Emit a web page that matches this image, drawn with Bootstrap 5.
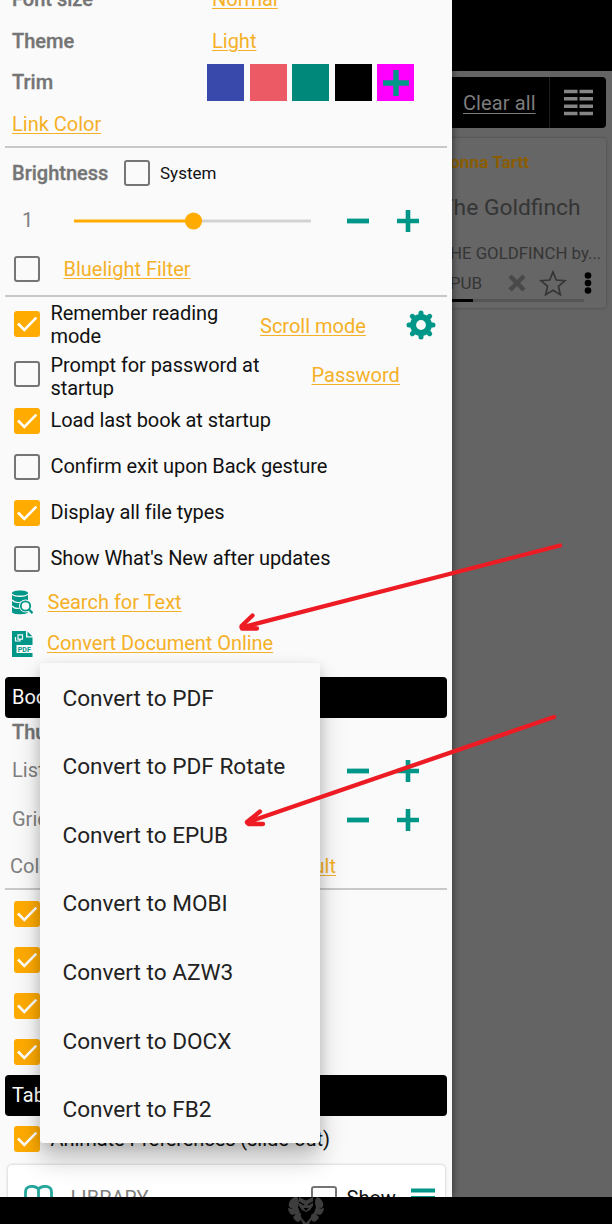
<!DOCTYPE html>
<html lang="en">
<head>
<meta charset="utf-8">
<meta name="viewport" content="width=device-width, initial-scale=1">
<title>Preferences</title>
<link href="https://cdn.jsdelivr.net/npm/bootstrap@5.3.0/dist/css/bootstrap.min.css" rel="stylesheet">
<script src="https://cdn.jsdelivr.net/npm/bootstrap@5.3.0/dist/js/bootstrap.bundle.min.js" defer></script>
<style>
body{font-family:Roboto,"Liberation Sans",sans-serif;font-size:20px;line-height:23px;background:#000;color:#111;width:612px;height:1224px;overflow:hidden}
.screen{height:1197px}
.drawer{width:451.5px;background:#fafafa;box-shadow:1px 0 7px rgba(0,0,0,.45);z-index:2}
.line{display:flex;align-items:center;flex:none;padding-left:12px;white-space:nowrap}
.opt{height:46px;padding-left:14px}
.lbl{font-weight:500;color:#757575;-webkit-text-stroke:.35px #757575}
.soft{color:#808080}
.lnk{color:#f5b027;text-decoration:underline;text-decoration-thickness:1.3px;text-underline-offset:2px}
.lnk:hover{color:#f5b027}
.rule{height:2px;background:#c8c8c8;margin:0 4.5px 0 5px;flex:none}
.box{width:26px;height:26px;border:2.6px solid #757575;border-radius:3px;flex:none}
.box.on{background:#ffab00;border:0}
.box svg{display:block}
.head-bar{height:41px;background:#000;color:#fff;border-radius:4px;margin:0 4.5px 0 5px;padding-left:7px;flex:none}
.chip{width:37px;height:37px;margin-right:5.5px}
.h42{height:42px}.name{width:200px}
.txt{margin-left:10.5px;letter-spacing:-.07px}
.pm{width:22px;height:22px;flex:none}
.tray{height:68px;margin:3px 7px 0 8px;background:#fff;border-radius:4px;box-shadow:0 0 3px rgba(0,0,0,.25);flex:none}
.popup-menu{left:40px;top:663px;width:280px;height:480px;background:#fafafa;border-radius:3px;z-index:4;padding-top:1px;box-shadow:0 16px 26px rgba(0,0,0,.23),0 3px 12px rgba(0,0,0,.12)}
.popup-menu div{height:68.55px;display:flex;align-items:center;padding-left:22.5px;font-size:22.6px;color:#222}
.shelf{background:#646464;color:#353535}
.tools{height:51px;background:#000;margin:6px 6px 0 -20px;border-radius:4px;color:#7c7c7c}
.book{margin:10px 6px 0 -20px;height:170px;background:#666;border-radius:3px;box-shadow:0 0 3px rgba(0,0,0,.3);padding-left:19.5px}
.marks{z-index:5;pointer-events:none}
</style>
</head>
<body class="position-relative">
<svg width="0" height="0" class="position-absolute"><defs>
<path id="tick" d="M4 12.5l6.3 6.3L22.3 6.7" fill="none" stroke="#fff" stroke-width="2.6"/>
<path id="plus" d="M0 11h22M11 0v22" fill="none" stroke="#009688" stroke-width="4.6"/>
<path id="minus" d="M0 11h22" fill="none" stroke="#009688" stroke-width="4.8"/>
</defs></svg>
<div class="screen d-flex overflow-hidden">
 <main class="drawer d-flex flex-column flex-shrink-0 position-relative">
  <div class="line h42" style="margin-top:-22px"><span class="lbl name">Font size</span><a class="lnk">Normal</a></div>
  <div class="line h42"><span class="lbl name">Theme</span><a class="lnk">Light</a></div>
  <div class="line" style="height:41px"><span class="lbl" style="width:195px">Trim</span>
   <span class="chip" style="background:#3949ab"></span><span class="chip" style="background:#ec5a66"></span><span class="chip" style="background:#00897b"></span><span class="chip" style="background:#000"></span><span class="chip d-flex align-items-center justify-content-center" style="background:#f0f"><svg width="26" height="26" viewBox="0 0 22 22"><use href="#plus"/></svg></span></div>
  <div class="line" style="height:43px"><a class="lnk">Link Color</a></div>
  <div class="rule"></div>
  <div class="line" style="height:50px"><span class="lbl" style="width:112px">Brightness</span><span class="box"></span><span style="font-size:17px;margin-left:10px">System</span></div>
  <div class="line" style="height:45px"><span class="soft" style="width:62px;padding-left:10px">1</span>
   <svg width="238" height="20"><path d="M119 10h118" stroke="#d3d3d3" stroke-width="3"/><path d="M0 10h119" stroke="#ffab00" stroke-width="3.2"/><circle cx="119.500" cy="10" r="8.600" fill="#ffab00"/></svg>
   <svg class="pm" style="margin-left:35px"><use href="#minus"/></svg><svg class="pm" style="margin-left:28px"><use href="#plus"/></svg></div>
  <div class="line" style="height:52px;padding-left:14px"><span class="box"></span><a class="lnk" style="margin-left:23.500px">Bluelight Filter</a></div>
  <div class="rule"></div>
  <div class="line opt" style="height:53px"><span class="box on"><svg width="26" height="26"><use href="#tick"/></svg></span><span class="txt" style="width:209.500px;padding-top:3px">Remember reading<br>mode</span><a class="lnk" style="padding-top:5px">Scroll mode</a>
   <svg width="30" height="30" viewBox="-15 -15 30 30" style="margin-left:40px;margin-top:2px"><circle r="7.900" fill="none" stroke="#009688" stroke-width="6"/><g stroke="#009688" stroke-width="5" stroke-linecap="round"><path d="M0-12v2M0 12v-2M-12 0h2M12 0h-2M-8.700-8.700l2 2M8.700 8.700l-2-2M-8.700 8.700l2-2M8.700-8.700l-2 2"/></g></svg></div>
  <div class="line opt" style="height:47.500px;overflow:hidden"><span class="box"></span><span class="txt" style="width:261px;padding-top:6px">Prompt for password at<br>startup</span><a class="lnk" style="padding-top:3px">Password</a></div>
  <div class="line opt"><span class="box on"><svg width="26" height="26"><use href="#tick"/></svg></span><span class="txt">Load last book at startup</span></div>
  <div class="line opt"><span class="box"></span><span class="txt">Confirm exit upon Back gesture</span></div>
  <div class="line opt"><span class="box on"><svg width="26" height="26"><use href="#tick"/></svg></span><span class="txt">Display all file types</span></div>
  <div class="line opt"><span class="box"></span><span class="txt">Show What's New after updates</span></div>
  <div class="line" style="height:41px"><svg width="21" height="25" viewBox="0 0 21 25"><path d="M0 3C0-.5 16-.5 16 3v19c0 3-16 3-16 0z" fill="#009688"/><path d="M0 4c2 3 14 3 16 0M0 10c2 2 6 3 9 2M0 16c2 2 5 3 8 2" fill="none" stroke="#fafafa" stroke-width="1.300"/><circle cx="13.500" cy="16" r="6.500" fill="#fafafa"/><circle cx="13.500" cy="16" r="4.700" fill="#fafafa" stroke="#009688" stroke-width="1.800"/><path d="M17 19.500l3.500 3.700" stroke="#009688" stroke-width="2.300"/></svg><a class="lnk" style="margin-left:14.500px">Search for Text</a></div>
  <div class="line" style="height:42px"><svg width="21" height="26" viewBox="0 0 21 26"><path d="M0 0h14v6.500h6.500V14H4.500v8h16v4H0z" fill="#009688"/><path d="M15.500.5v4.800h4.800z" fill="#009688"/><path d="M3.500 6v4h4.500V8.500M6 3.800h4.500v4.300H6z" fill="none" stroke="#fafafa" stroke-width="1.200"/><text x="5.800" y="21" font-size="8" font-weight="700" fill="#009688" textLength="13" lengthAdjust="spacingAndGlyphs">PDF</text></svg><a class="lnk" style="margin-left:14px;letter-spacing:-.05px">Convert Document Online</a></div>
  <div class="head-bar d-flex align-items-center" style="margin-top:12.500px">Book list</div>
  <div class="line" style="height:29px"><span class="lbl">Thumbnails</span></div>
  <div class="line soft" style="height:47px"><span style="width:335px">List</span><svg class="pm"><use href="#minus"/></svg><svg class="pm" style="margin-left:28px"><use href="#plus"/></svg></div>
  <div class="line soft" style="height:51.500px"><span style="width:335px">Grid</span><svg class="pm"><use href="#minus"/></svg><svg class="pm" style="margin-left:28px"><use href="#plus"/></svg></div>
  <div class="line soft justify-content-between" style="height:42px;padding-left:10px;padding-right:115.500px"><span>Color</span><a class="lnk">Default</a></div>
  <div class="rule"></div>
  <div class="line opt" style="margin-top:1px"><span class="box on"><svg width="26" height="26"><use href="#tick"/></svg></span></div>
  <div class="line opt"><span class="box on"><svg width="26" height="26"><use href="#tick"/></svg></span></div>
  <div class="line opt"><span class="box on"><svg width="26" height="26"><use href="#tick"/></svg></span></div>
  <div class="line opt"><span class="box on"><svg width="26" height="26"><use href="#tick"/></svg></span></div>
  <div class="head-bar d-flex align-items-center">Tabs</div>
  <div class="line opt"><span class="box on"><svg width="26" height="26"><use href="#tick"/></svg></span><span class="txt" style="padding-top:2px">Animate Preferences (slide-out)</span></div>
  <div class="tray d-flex align-items-center">
   <svg width="29" height="28" viewBox="0 0 29 28" style="margin-left:16px;margin-top:1px"><path d="M14.500 4C12 1 7 1 4.500 2 2 3 1.500 4 1.500 7v20M14.500 4C17 1 22 1 24.500 2c2.500 1 3 2 3 5v20M14.500 3v24" fill="none" stroke="#26a69a" stroke-width="2.800"/></svg>
   <span class="soft" style="margin-left:17.500px;width:240px">LIBRARY</span><span class="box"></span><span style="margin-left:10px;width:64px">Show</span>
   <svg width="24" height="24"><path d="M0 3.500h24M0 11h24M0 19h24" stroke="#009688" stroke-width="4"/></svg></div>
 </main>
 <aside class="shelf flex-grow-1 d-flex flex-column">
  <div style="height:71px;background:#000"></div>
  <div class="tools d-flex align-items-center">
   <a style="margin-left:31.500px;width:86px;text-decoration:underline;text-decoration-thickness:1.300px;text-underline-offset:3px;white-space:nowrap;padding-top:1px;letter-spacing:.1px">Clear all</a>
   <span class="h-100" style="border-left:1.500px solid #1d1d1d;width:15px"></span>
   <svg width="29" height="27"><path d="M0 2.500h13.500M15.500 2.500H29M0 9.800h13.500M15.500 9.800H29M0 17.200h13.500M15.500 17.200H29M0 24.500h13.500M15.500 24.500H29" stroke="#858585" stroke-width="3.600"/></svg>
  </div>
  <div class="book text-nowrap position-relative">
   <div style="padding-top:13px;font-size:17.200px;font-weight:700;color:#8a5c00;margin-left:-12px">Donna Tartt</div>
   <div style="padding-top:22px;font-size:22.800px;margin-left:-11px">The Goldfinch</div>
   <div style="padding-top:23px;font-size:16.800px;margin-left:-11px">THE GOLDFINCH by...</div>
   <div class="d-flex align-items-center" style="height:36px;font-size:17px"><span style="margin-left:-11px;width:67.500px">EPUB</span>
    <svg width="18" height="18"><path d="M2 2l14 14M16 2L2 16" stroke="#494949" stroke-width="4.500"/></svg>
    <svg width="28" height="27" viewBox="0 0 28 27" style="margin-left:13px"><path d="M14 2l3.300 8 8.700.7-6.600 5.700 2 8.400L14 20.200l-7.400 4.600 2-8.400L2 10.700l8.700-.7z" fill="none" stroke="#353535" stroke-width="1.700"/></svg>
    <svg width="8" height="22" style="margin-left:17px"><g fill="#000"><circle cx="4" cy="3.500" r="3.300"/><circle cx="4" cy="11" r="3.300"/><circle cx="4" cy="18.500" r="3.300"/></g></svg></div>
   <div class="d-flex" style="height:3px;width:133px;background:#555;margin-top:-2px"><span style="width:22px;background:#000"></span></div>
  </div>
 </aside>
</div>
<footer style="height:27px;background:#000" class="position-relative overflow-hidden">
 <svg width="36" height="27" viewBox="0 0 36 27" class="d-block" style="margin-left:288px"><g fill="#3d3d3d"><path d="M11 0l7 3.500L25 0v9l-3 4-4 2-4-2-3-4z"/><path d="M7 0C2 2 0 6 1 10l4 2-5-1c0 3 2 6 4 7l4-1-3 3c1 3 3 4 5 5l3-2 2 4h6l2-4 3 2c2-1 4-2 5-5l-3-3 4 1c2-1 4-4 4-7l-5 1 4-2c1-4-1-8-6-10-3 4-2 7-1 10l-2 6-7 4-7-4-2-6c1-3 2-6-1-10z"/></g><path d="M11 5l5 3M25 5l-5 3" stroke="#000" stroke-width="1.300"/><path d="M15.500 11h5l-2.500 3zM13 17l5-2 5 2c1 4-3 6-5 9-2-3-6-5-5-9" fill="#000"/></svg>
</footer>
<div class="popup-menu position-absolute"><div>Convert to PDF</div><div>Convert to PDF Rotate</div><div>Convert to EPUB</div><div>Convert to MOBI</div><div>Convert to AZW3</div><div>Convert to DOCX</div><div>Convert to FB2</div></div>
<svg class="marks position-absolute top-0 start-0" width="612" height="1224"><g fill="none" stroke="#ed1c24" stroke-width="4.300" stroke-linecap="round" stroke-linejoin="round"><path d="M560 545.500L241.500 627.500M252.500 615.500L241.500 626L242 628.500H257"/><path d="M554 717L247 822.500M260 811.500L247 822L248.500 824H263"/></g></svg>
</body>
</html>
